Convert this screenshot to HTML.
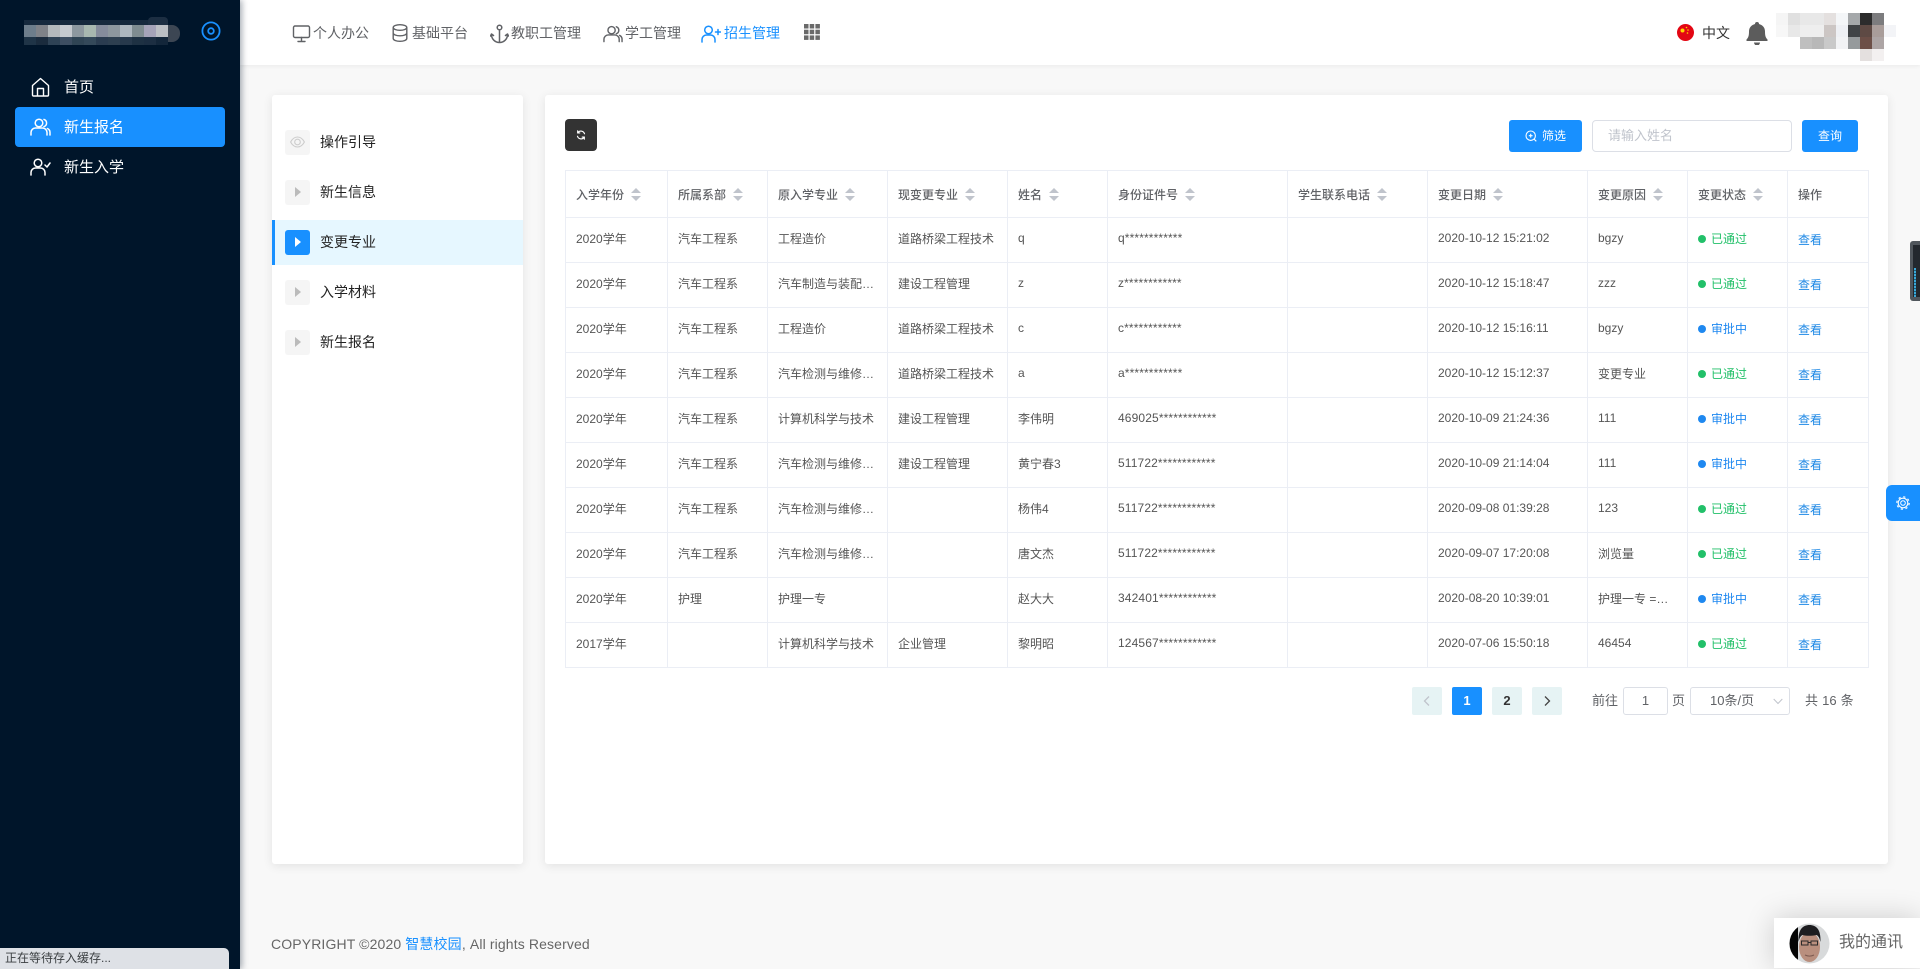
<!DOCTYPE html>
<html lang="zh-CN"><head><meta charset="utf-8"><title>变更专业</title>
<style>
*{box-sizing:border-box}
html,body{margin:0;width:1920px;height:969px;overflow:hidden;background:#f8f8f8;font-family:"Liberation Sans","Noto Sans CJK SC",sans-serif;color:#555}
.a{position:absolute}
.t{position:absolute;white-space:nowrap;line-height:20px}
#side{left:0;top:0;width:240px;height:969px;background:#00152a;box-shadow:2px 0 6px rgba(0,21,41,.35);z-index:3}
#head{left:240px;top:0;width:1680px;height:65px;background:#fff;box-shadow:0 1px 4px rgba(0,0,0,.06);z-index:2}
.card{background:#fff;border-radius:3px;box-shadow:0 2px 10px rgba(0,0,0,.09)}
.blk{position:absolute;width:12px;height:12px}
.nav{font-size:14px;color:#606266;top:23px}
.mi{font-size:15px;color:#fff;left:64px}
.ic{position:absolute;left:285px;width:25px;height:25px;background:#f5f5f5;border-radius:3px}
.ic i{position:absolute;left:10px;top:7px;border-left:6px solid #bbb;border-top:5px solid transparent;border-bottom:5px solid transparent}
.lm{position:absolute;left:320px;font-size:14px;line-height:20px;color:#222}
table{position:absolute;left:565px;top:170px;width:1303px;border-collapse:collapse;table-layout:fixed;font-size:12px;color:#555}
td,th{border:1px solid #ebeef5;height:45px;padding:0 0 0 10px;text-align:left;white-space:nowrap;overflow:hidden;font-weight:normal}
td{padding-bottom:4px}
td:nth-child(6){letter-spacing:.13px}
th{height:47px;color:#606266;font-weight:500}
.s{display:inline-block;position:relative;width:10px;height:13px;margin-left:7px;vertical-align:-2px}
.s:before,.s:after{content:"";position:absolute;left:0;border-left:5px solid transparent;border-right:5px solid transparent}
.s:before{top:0;border-bottom:5px solid #c0c4cc}
.s:after{bottom:0;border-top:5px solid #c0c4cc}
.ok,.ing{padding-left:0}
.ok:before,.ing:before{content:"";display:inline-block;width:8px;height:8px;border-radius:50%;margin-right:5px;vertical-align:-0.5px}
.ok{color:#22c069}.ok:before{background:#22c069}
.ing{color:#1e88f0}.ing:before{background:#1e88f0}
td.v{color:#1e88e5;padding-bottom:2px}
.pg{position:absolute;top:687px;width:30px;height:28px;background:#e6f3f4;border-radius:2px;text-align:center;font-size:13px;font-weight:bold;line-height:28px;color:#333}
.box{position:absolute;top:687px;height:28px;border:1px solid #dcdfe6;border-radius:3px;background:#fff;font-size:13px;line-height:26px;color:#606266}
.btn{position:absolute;top:120px;height:32px;background:#1890ff;border-radius:3px;color:#fff;font-size:12px;line-height:32px}
</style></head><body>

<div id="side" class="a">
  <div class="a" style="left:24px;top:20px;width:144px;height:5px;background:#16293d"></div>
  <div class="a" style="left:148px;top:17px;width:20px;height:8px;background:#1c2e42;border-radius:4px 4px 0 0"></div>
  <div class="a" style="left:24px;top:25px;width:144px;height:12px;display:flex">
    <b style="flex:1;background:#6d7d8b"></b><b style="flex:1;background:#7f8288"></b><b style="flex:1;background:#b4b9bc"></b><b style="flex:1;background:#c6cacf"></b><b style="flex:1;background:#8d989f"></b><b style="flex:1;background:#a8b8b0"></b><b style="flex:1;background:#858c9c"></b><b style="flex:1;background:#8d979e"></b><b style="flex:1;background:#aeb7bf"></b><b style="flex:1;background:#7f8c90"></b><b style="flex:1;background:#a5a3b8"></b><b style="flex:1;background:#bcbfc4"></b>
  </div>
  <div class="a" style="left:24px;top:37px;width:144px;height:8px;display:flex">
    <b style="flex:1;background:#1f3447"></b><b style="flex:1;background:#1a2b3d"></b><b style="flex:1;background:#2e4255"></b><b style="flex:1;background:#3d4e62"></b><b style="flex:1;background:#2f4454"></b><b style="flex:1;background:#34495a"></b><b style="flex:1;background:#2a3c50"></b><b style="flex:1;background:#2d3f50"></b><b style="flex:1;background:#27394c"></b><b style="flex:1;background:#1e3143"></b><b style="flex:1;background:#1c2e42"></b><b style="flex:1;background:#13263a"></b>
  </div>
  <div class="a" style="left:168px;top:25px;width:12px;height:17px;background:#3c4653;border-radius:0 8px 8px 0"></div>
  <svg class="a" style="left:201px;top:21px" width="20" height="20" viewBox="0 0 20 20" fill="none" stroke="#1890ff" stroke-width="1.8"><circle cx="10" cy="10" r="8.6"/><circle cx="10" cy="10" r="2.8"/></svg>

  <div class="a" style="left:15px;top:107px;width:210px;height:40px;background:#1890ff;border-radius:4px"></div>
  <svg class="a" style="left:31px;top:77px" width="19" height="20" viewBox="0 0 19 20" fill="none" stroke="#fff" stroke-width="1.4" stroke-linejoin="round"><path d="M1.5 8.5 9.5 1.5l8 7V18a1 1 0 0 1-1 1h-14a1 1 0 0 1-1-1z"/><path d="M6.5 19v-7.500h6V19"/></svg>
  <div class="t mi" style="top:78px">首页</div>
  <svg class="a" style="left:30px;top:118px" width="21" height="18" viewBox="0 0 21 18" fill="none" stroke="#fff" stroke-width="1.5" stroke-linecap="round"><circle cx="9" cy="5" r="3.8"/><path d="M1 17v-2.500A4.500 4.500 0 0 1 5.500 10h7A4.500 4.500 0 0 1 17 14.500V17"/><path d="M14 1.400a3.800 3.800 0 0 1 0 7.200M17.500 10.500A4.500 4.500 0 0 1 20 14.500V17"/></svg>
  <div class="t mi" style="top:118px">新生报名</div>
  <svg class="a" style="left:30px;top:158px" width="21" height="18" viewBox="0 0 21 18" fill="none" stroke="#fff" stroke-width="1.5" stroke-linecap="round" stroke-linejoin="round"><circle cx="8" cy="5" r="3.8"/><path d="M1 17v-2.500A4.500 4.500 0 0 1 5.500 10h5A4.500 4.500 0 0 1 15 14.500V17"/><path d="M15 7l2 2 3-4"/></svg>
  <div class="t mi" style="top:158px">新生入学</div>
  <div class="a" style="left:0;top:948px;width:229px;height:21px;background:#dee1e6;border-radius:0 5px 0 0;font-size:12px;line-height:21px;color:#3c4043;padding-left:5px">正在等待存入缓存...</div>
</div>

<div id="head" class="a"></div>
<div class="a" style="left:0;top:0;width:1920px;height:65px;z-index:4">
  <svg class="a" style="left:292px;top:24px" width="19" height="19" viewBox="0 0 19 19" fill="none" stroke="#606266" stroke-width="1.400" stroke-linecap="round" stroke-linejoin="round"><rect x="1.500" y="2" width="16" height="11.500" rx="1.500"/><path d="M9.500 13.500V17M6 17.500h7"/></svg>
  <div class="t nav" style="left:313px">个人办公</div>
  <svg class="a" style="left:392px;top:24px" width="16" height="18" viewBox="0 0 16 18" fill="none" stroke="#606266" stroke-width="1.400"><ellipse cx="8" cy="3.500" rx="6.800" ry="2.800"/><path d="M1.200 3.500v11c0 1.500 3 2.800 6.800 2.800s6.800-1.300 6.800-2.800v-11M1.200 9c0 1.500 3 2.800 6.800 2.800s6.800-1.300 6.800-2.800"/></svg>
  <div class="t nav" style="left:412px">基础平台</div>
  <svg class="a" style="left:490px;top:24px" width="19" height="20" viewBox="0 0 19 20" fill="none" stroke="#606266" stroke-width="1.500" stroke-linecap="round" stroke-linejoin="round"><circle cx="9.500" cy="3.500" r="2.300"/><path d="M9.500 6v12.500M1.500 10.500c0 4.500 3.500 8 8 8s8-3.500 8-8M.5 12l1-2 2 1.500M18.500 12l-1-2-2 1.500"/></svg>
  <div class="t nav" style="left:511px">教职工管理</div>
  <svg class="a" style="left:603px;top:25px" width="20" height="18" viewBox="0 0 21 18" fill="none" stroke="#606266" stroke-width="1.500" stroke-linecap="round"><circle cx="9" cy="5" r="3.800"/><path d="M1 17v-2.500A4.500 4.500 0 0 1 5.500 10h7A4.500 4.500 0 0 1 17 14.500V17"/><path d="M14 1.400a3.800 3.800 0 0 1 0 7.200M17.500 10.500A4.500 4.500 0 0 1 20 14.500V17"/></svg>
  <div class="t nav" style="left:625px">学工管理</div>
  <svg class="a" style="left:701px;top:25px" width="20" height="18" viewBox="0 0 20 18" fill="none" stroke="#1890ff" stroke-width="1.500" stroke-linecap="round"><circle cx="7.500" cy="5" r="3.800"/><path d="M1 17v-2.500A4.500 4.500 0 0 1 5.500 10h4A4.500 4.500 0 0 1 14 14.500V17M14.500 7h5M17 4.500v5"/></svg>
  <div class="t nav" style="left:724px;color:#1890ff">招生管理</div>
  <svg class="a" style="left:804px;top:24px" width="16" height="16" viewBox="0 0 16 16" fill="#6a6a6a"><rect width="4.500" height="4.500"/><rect x="5.700" width="4.500" height="4.500"/><rect x="11.400" width="4.500" height="4.500"/><rect y="5.700" width="4.500" height="4.500"/><rect x="5.700" y="5.700" width="4.500" height="4.500"/><rect x="11.400" y="5.700" width="4.500" height="4.500"/><rect y="11.400" width="4.500" height="4.500"/><rect x="5.700" y="11.400" width="4.500" height="4.500"/><rect x="11.400" y="11.400" width="4.500" height="4.500"/></svg>

  <svg class="a" style="left:1677px;top:24px" width="17" height="17" viewBox="0 0 17 17"><circle cx="8.500" cy="8.500" r="8.500" fill="#e30613"/><circle cx="5.500" cy="6.500" r="2" fill="#ffd400"/><circle cx="9.500" cy="3.500" r=".8" fill="#ffd400"/><circle cx="11" cy="6" r=".8" fill="#ffd400"/><circle cx="10.500" cy="9" r=".8" fill="#ffd400"/></svg>
  <div class="t" style="left:1702px;top:23px;font-size:14px;color:#333">中文</div>
  <svg class="a" style="left:1746px;top:22px" width="22" height="23" viewBox="0 0 22 23" fill="#5c5c5c"><path d="M11 0a2 2 0 0 1 2 2c3.500 1 6 3.500 6 7.500 0 4 .5 6 2.500 8v1.500H.5v-1.500c2-2 2.500-4 2.500-8C3 5.500 5.500 3 9 2a2 2 0 0 1 2-2z"/><path d="M8 20.500h6a3 3 0 0 1-6 0z"/></svg>
  <!-- blurred user block -->
  <div class="blk" style="left:1776px;top:13px;background:#f5f5f5"></div><div class="blk" style="left:1788px;top:13px;background:#e0e0e0"></div><div class="blk" style="left:1800px;top:13px;background:#e8e8e8"></div><div class="blk" style="left:1812px;top:13px;background:#e8e8e8"></div><div class="blk" style="left:1824px;top:13px;background:#e4e0df"></div><div class="blk" style="left:1836px;top:13px;background:#f4f6f8"></div><div class="blk" style="left:1848px;top:13px;background:#a5a8aa"></div><div class="blk" style="left:1860px;top:13px;background:#2c2c2c"></div><div class="blk" style="left:1872px;top:13px;background:#7c7c7e"></div>
  <div class="blk" style="left:1776px;top:25px;background:#f7f7f7"></div><div class="blk" style="left:1788px;top:25px;background:#e8e8e8"></div><div class="blk" style="left:1800px;top:25px;background:#eee"></div><div class="blk" style="left:1812px;top:25px;background:#eee"></div><div class="blk" style="left:1824px;top:25px;background:#ccc6c4"></div><div class="blk" style="left:1836px;top:25px;background:#eef0f4"></div><div class="blk" style="left:1848px;top:25px;background:#404346"></div><div class="blk" style="left:1860px;top:25px;background:#5e4a44"></div><div class="blk" style="left:1872px;top:25px;background:#a99d9a"></div><div class="blk" style="left:1884px;top:25px;background:#f3f4f7"></div>
  <div class="blk" style="left:1800px;top:37px;background:#bfbfbf"></div><div class="blk" style="left:1812px;top:37px;background:#b8b8b8"></div><div class="blk" style="left:1824px;top:37px;background:#c9c9c9"></div><div class="blk" style="left:1836px;top:37px;background:#f2f3f5"></div><div class="blk" style="left:1848px;top:37px;background:#969a9c"></div><div class="blk" style="left:1860px;top:37px;background:#6c4f47"></div><div class="blk" style="left:1872px;top:37px;background:#ada5a5"></div>
  <div class="blk" style="left:1860px;top:49px;background:#e4e0df"></div><div class="blk" style="left:1872px;top:49px;background:#f3f0f0"></div>
</div>

<div class="a card" style="left:272px;top:95px;width:251px;height:769px"></div>
<div class="ic" style="top:130px"></div>
<svg class="a" style="left:290px;top:136px" width="15" height="12" viewBox="0 0 15 12" fill="none" stroke="#ccc" stroke-width="1.100"><path d="M.6 6C2.500 2.500 5 1 7.500 1s5 1.500 6.900 5c-1.900 3.500-4.400 5-6.900 5S2.500 9.500.6 6z"/><circle cx="7.500" cy="6" r="2.800"/></svg>
<div class="lm" style="top:132px">操作引导</div>
<div class="ic" style="top:180px"><i></i></div><div class="lm" style="top:182px">新生信息</div>
<div class="a" style="left:272px;top:220px;width:251px;height:45px;background:#e6f7ff;border-left:3px solid #1890ff"></div>
<div class="ic" style="top:230px;background:#1890ff"><i style="border-left-color:#fff"></i></div><div class="lm" style="top:232px">变更专业</div>
<div class="ic" style="top:280px"><i></i></div><div class="lm" style="top:282px">入学材料</div>
<div class="ic" style="top:330px"><i></i></div><div class="lm" style="top:332px">新生报名</div>

<div class="a card" style="left:545px;top:95px;width:1343px;height:769px"></div>
<div class="a" style="left:565px;top:119px;width:32px;height:32px;background:#333;border-radius:4px"></div>
<svg class="a" style="left:576px;top:130px" width="10" height="10" viewBox="0 0 12 12" fill="none" stroke="#fff" stroke-width="1.400" stroke-linecap="round"><path d="M10.200 4.500A4.500 4.500 0 0 0 2.400 3M1.800 7.500A4.500 4.500 0 0 0 9.600 9"/><path d="M2 1v2.500h2.500M10 11V8.500H7.500"/></svg>
<div class="btn" style="left:1509px;width:73px;padding-left:33px">筛选</div>
<svg class="a" style="left:1525px;top:130px" width="12" height="12" viewBox="0 0 12 12" fill="none" stroke="#fff" stroke-width="1.100"><circle cx="5.700" cy="5.700" r="4.700"/><path d="M9 9l2.300 2.300M5.700 3.800v3.800M3.800 5.700h3.800"/></svg>
<div class="a" style="left:1592px;top:120px;width:200px;height:32px;border:1px solid #dcdfe6;border-radius:4px;background:#fff;font-size:13px;line-height:30px;color:#c0c4cc;padding-left:15px">请输入姓名</div>
<div class="btn" style="left:1802px;width:56px;text-align:center">查询</div>

<table>
<colgroup><col style="width:102px"><col style="width:100px"><col style="width:120px"><col style="width:120px"><col style="width:100px"><col style="width:180px"><col style="width:140px"><col style="width:160px"><col style="width:100px"><col style="width:100px"><col style="width:81px"></colgroup>
<tr><th>入学年份<span class="s"></span></th><th>所属系部<span class="s"></span></th><th>原入学专业<span class="s"></span></th><th>现变更专业<span class="s"></span></th><th>姓名<span class="s"></span></th><th>身份证件号<span class="s"></span></th><th>学生联系电话<span class="s"></span></th><th>变更日期<span class="s"></span></th><th>变更原因<span class="s"></span></th><th>变更状态<span class="s"></span></th><th>操作</th></tr>
<tr><td>2020学年</td><td>汽车工程系</td><td>工程造价</td><td>道路桥梁工程技术</td><td>q</td><td>q************</td><td></td><td>2020-10-12 15:21:02</td><td>bgzy</td><td><span class="ok">已通过</span></td><td class="v">查看</td></tr>
<tr><td>2020学年</td><td>汽车工程系</td><td>汽车制造与装配…</td><td>建设工程管理</td><td>z</td><td>z************</td><td></td><td>2020-10-12 15:18:47</td><td>zzz</td><td><span class="ok">已通过</span></td><td class="v">查看</td></tr>
<tr><td>2020学年</td><td>汽车工程系</td><td>工程造价</td><td>道路桥梁工程技术</td><td>c</td><td>c************</td><td></td><td>2020-10-12 15:16:11</td><td>bgzy</td><td><span class="ing">审批中</span></td><td class="v">查看</td></tr>
<tr><td>2020学年</td><td>汽车工程系</td><td>汽车检测与维修…</td><td>道路桥梁工程技术</td><td>a</td><td>a************</td><td></td><td>2020-10-12 15:12:37</td><td>变更专业</td><td><span class="ok">已通过</span></td><td class="v">查看</td></tr>
<tr><td>2020学年</td><td>汽车工程系</td><td>计算机科学与技术</td><td>建设工程管理</td><td>李伟明</td><td>469025************</td><td></td><td>2020-10-09 21:24:36</td><td>111</td><td><span class="ing">审批中</span></td><td class="v">查看</td></tr>
<tr><td>2020学年</td><td>汽车工程系</td><td>汽车检测与维修…</td><td>建设工程管理</td><td>黄宁春3</td><td>511722************</td><td></td><td>2020-10-09 21:14:04</td><td>111</td><td><span class="ing">审批中</span></td><td class="v">查看</td></tr>
<tr><td>2020学年</td><td>汽车工程系</td><td>汽车检测与维修…</td><td></td><td>杨伟4</td><td>511722************</td><td></td><td>2020-09-08 01:39:28</td><td>123</td><td><span class="ok">已通过</span></td><td class="v">查看</td></tr>
<tr><td>2020学年</td><td>汽车工程系</td><td>汽车检测与维修…</td><td></td><td>唐文杰</td><td>511722************</td><td></td><td>2020-09-07 17:20:08</td><td>浏览量</td><td><span class="ok">已通过</span></td><td class="v">查看</td></tr>
<tr><td>2020学年</td><td>护理</td><td>护理一专</td><td></td><td>赵大大</td><td>342401************</td><td></td><td>2020-08-20 10:39:01</td><td>护理一专 =…</td><td><span class="ing">审批中</span></td><td class="v">查看</td></tr>
<tr><td>2017学年</td><td></td><td>计算机科学与技术</td><td>企业管理</td><td>黎明昭</td><td>124567************</td><td></td><td>2020-07-06 15:50:18</td><td>46454</td><td><span class="ok">已通过</span></td><td class="v">查看</td></tr>
</table>

<div class="pg" style="left:1412px"></div>
<svg class="a" style="left:1422px;top:695px" width="10" height="12" viewBox="0 0 10 12" fill="none" stroke="#c0c4cc" stroke-width="1.300"><path d="M7 1.500 2.500 6 7 10.500"/></svg>
<div class="pg" style="left:1452px;background:#1890ff;color:#fff">1</div>
<div class="pg" style="left:1492px">2</div>
<div class="pg" style="left:1532px"></div>
<svg class="a" style="left:1542px;top:695px" width="10" height="12" viewBox="0 0 10 12" fill="none" stroke="#444" stroke-width="1.300"><path d="M3 1.500 7.500 6 3 10.500"/></svg>
<div class="t" style="left:1592px;top:691px;font-size:13px;color:#606266">前往</div>
<div class="box" style="left:1623px;width:45px;text-align:center">1</div>
<div class="t" style="left:1672px;top:691px;font-size:13px;color:#606266">页</div>
<div class="box" style="left:1690px;width:100px;padding-left:19px">10条/页</div>
<svg class="a" style="left:1773px;top:698px" width="10" height="7" viewBox="0 0 10 7" fill="none" stroke="#c0c4cc" stroke-width="1"><path d="M.7 1 5 5.500 9.300 1"/></svg>
<div class="t" style="left:1805px;top:691px;font-size:13px;color:#606266;word-spacing:.5px">共 16 条</div>

<div class="t" style="left:271px;top:934px;font-size:14px;color:#666;letter-spacing:.13px">COPYRIGHT ©2020 <span style="color:#1890ff">智慧校园</span>, All rights Reserved</div>

<div class="a" style="left:1910px;top:241px;width:10px;height:60px;background:#50565c;border-radius:3px 0 0 3px"></div>
<div class="a" style="left:1913px;top:245px;width:7px;height:52px;background:#23282e"></div>
<div class="a" style="left:1914px;top:268px;width:2px;height:29px;background:repeating-linear-gradient(#3aa8d8 0 2px,#1d5c78 2px 3px)"></div>
<div class="a" style="left:1886px;top:485px;width:34px;height:36px;background:#1890ff;border-radius:6px 0 0 6px"></div>
<svg class="a" style="left:1896px;top:496px" width="14" height="14" viewBox="0 0 14 14" fill="none" stroke="#fff"><circle cx="7" cy="7" r="4.800" stroke-width="1.100"/><circle cx="7" cy="7" r="2.300" stroke-width="1"/><circle cx="7" cy="7" r="6.200" stroke-width="1.200" stroke-dasharray="2.200 2.670"/></svg>

<div class="a" style="left:1774px;top:918px;width:146px;height:50px;background:#fff;box-shadow:0 0 30px rgba(0,0,0,.18);z-index:5">
  <svg class="a" style="left:15px;top:5px" width="41" height="41" viewBox="0 0 41 41"><defs><clipPath id="c"><circle cx="20.500" cy="20.500" r="20"/></clipPath></defs><g clip-path="url(#c)"><rect width="41" height="41" fill="#d8dadb"/><rect width="9" height="41" fill="#050505"/><ellipse cx="20.500" cy="24" rx="10.500" ry="15" fill="#b98f7e"/><path d="M9.500 19C9 6 14 2 20.500 2S32 6 31.500 19c-1-4-2-6-4-7-5 1-10 1-14 0-2 1-3 3-4 7z" fill="#1d1d20"/><path d="M12.500 18h6.500v4h-6.500zM22 18h6.500v4H22zM19 19.500h3" fill="none" stroke="#2a2a2a" stroke-width="1"/><path d="M16 32c3 1.500 6 1.500 9 0" fill="none" stroke="#7d5a50" stroke-width="1"/></g></svg>
  <div class="t" style="left:65px;top:15px;font-size:16px;color:#666">我的通讯</div>
</div>
</body></html>
